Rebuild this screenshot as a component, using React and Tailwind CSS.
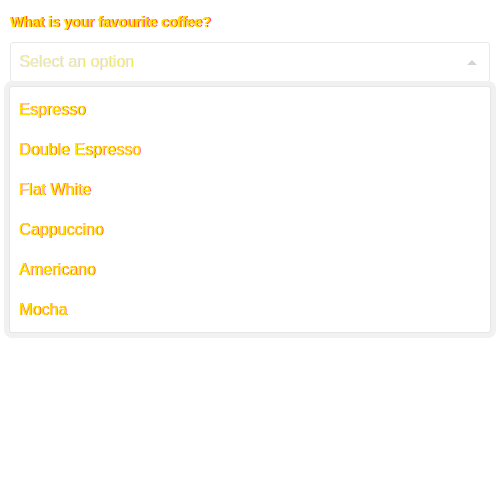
import React from "react";

const items = ["Espresso", "Double Espresso", "Flat White", "Cappuccino", "Americano", "Mocha"];
const txt = "text-[#ffe800] [text-shadow:0.6px_0_0_#ff1a00]";

export default function App() {
  return (
    <div className="w-[500px] h-[500px] bg-white font-['Liberation_Sans',Arial,sans-serif] px-[10px] pt-[13px]">
      <div className="text-[14px] font-bold leading-[18px] text-[#ffe000] [text-shadow:1px_0_0_#ff1a00]">What is your favourite coffee?</div>
      <div className="relative mt-[11px]">
        <div className="h-[40px] border border-[#e8e8e8] rounded-[3px] flex items-center justify-between pl-[8px] pr-[12px]">
          <span className="text-[16px] text-[#e8e8e8] [text-shadow:0.7px_0_0_#fff000]">Select an option</span>
          <span className="w-0 h-0 border-l-[5px] border-r-[5px] border-b-[5px] border-l-transparent border-r-transparent border-b-[#d4d4d4]" />
        </div>
        <div className="absolute left-[-6px] right-[-6px] top-[39px] rounded-[8px] bg-[#f1f1f1] p-[5px]">
          <div className="bg-white border border-[#e6e6e6] rounded-[3px] pt-[3px] pb-[2px]">
            {items.map((it) => (
              <div key={it} className={`h-[40px] flex items-center pl-[9px] text-[16px] ${txt}`}>{it}</div>
            ))}
          </div>
        </div>
      </div>
    </div>
  );
}
